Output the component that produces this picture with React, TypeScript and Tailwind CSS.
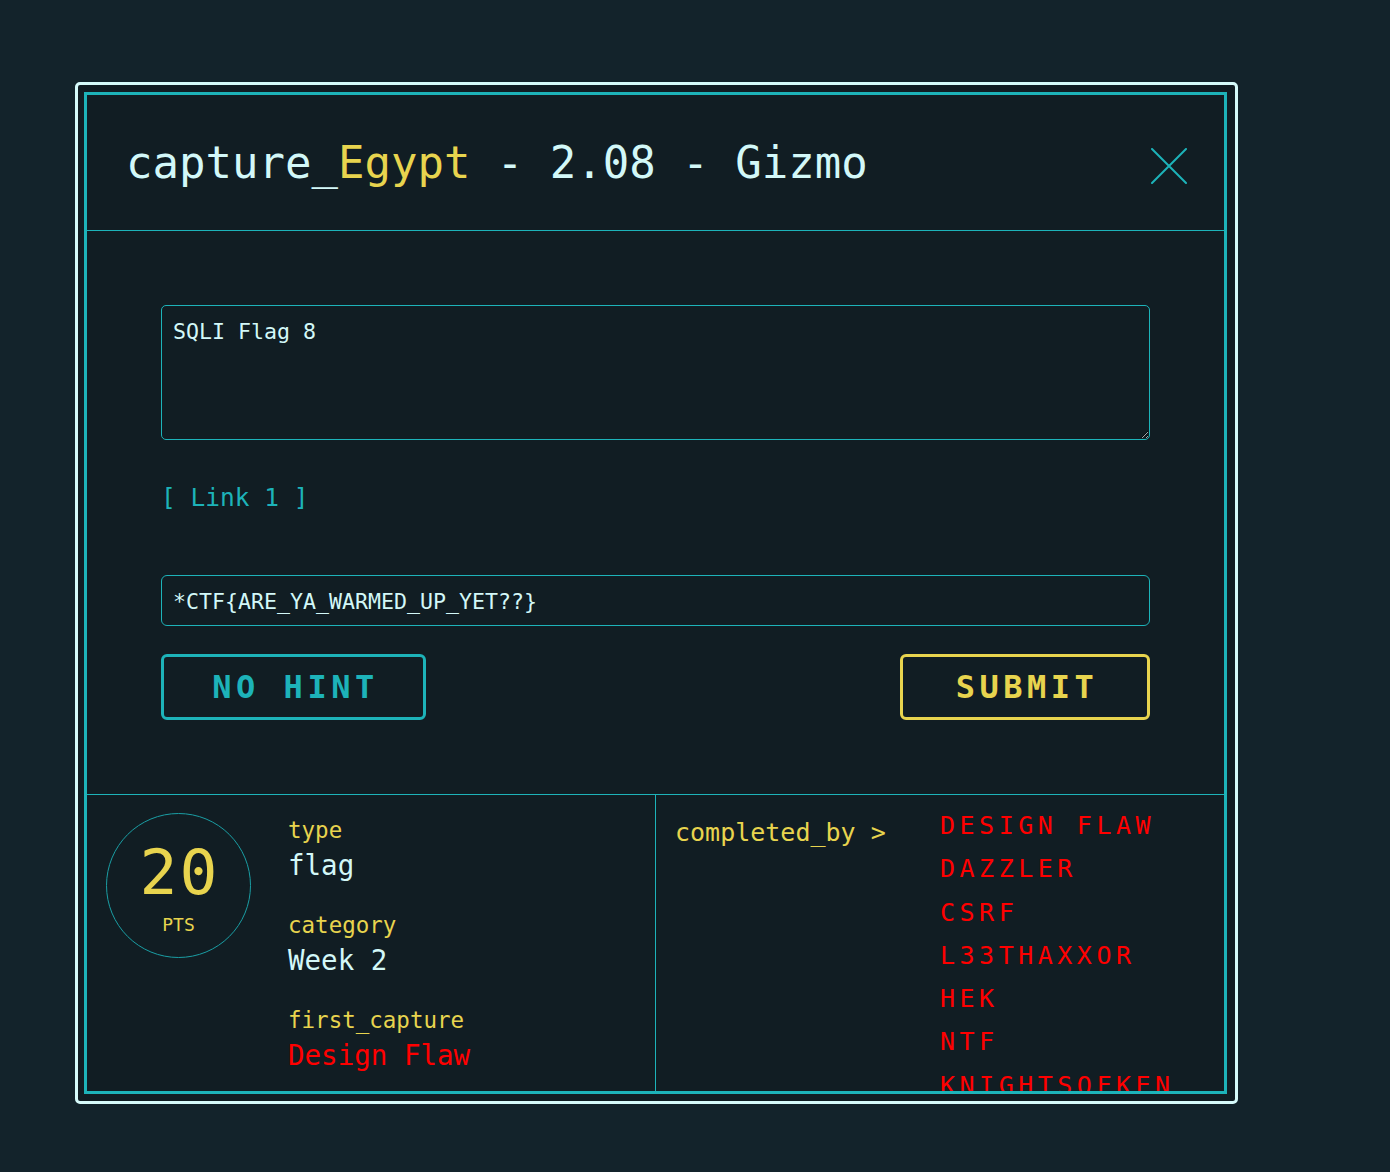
import React from "react";

const COMPLETED_BY = [
  "DESIGN FLAW",
  "DAZZLER",
  "CSRF",
  "L33THAXXOR",
  "HEK",
  "NTF",
  "KNIGHTSOFKEN",
];

const DETAILS = [
  { label: "type", value: "flag", tone: "text-[#d3f8f8]" },
  { label: "category", value: "Week 2", tone: "text-[#d3f8f8]" },
  { label: "first_capture", value: "Design Flaw", tone: "text-[#ff0000]" },
];

function CloseIcon() {
  return (
    <svg width="36" height="36" viewBox="0 0 36 36" fill="none" aria-hidden="true">
      <path d="M1 1 L35 35 M35 1 L1 35" stroke="#1db3b9" strokeWidth="2" strokeLinecap="round" />
    </svg>
  );
}

function PointsBadge({ points }: { points: number }) {
  return (
    <div className="flex h-[145px] w-[145px] shrink-0 flex-col items-center rounded-full border border-[#1a9ea4] pt-[28px]">
      <span className="pl-[2px] text-[63px] leading-[62px] tracking-[2px] text-[#e8d44e]">{points}</span>
      <span className="mt-[12px] text-[18px] leading-[18px] text-[#e8d44e]">PTS</span>
    </div>
  );
}

export default function App() {
  return (
    <div className="min-h-screen bg-[#13232b] pl-[75px] pt-[82px] font-['DejaVu_Sans_Mono',monospace]">
      <div className="h-[1022px] w-[1163px] rounded-[5px] border-[3px] border-[#d6fbfb] bg-[#111d23] py-[7px] pl-[6px] pr-[8px]">
        <div className="flex h-full flex-col overflow-hidden border-[3px] border-[#1db3b9]">
          {/* header */}
          <div className="flex h-[136px] shrink-0 items-center justify-between border-b border-[#1db3b9] pl-[39px] pr-[37px]">
            <h1 className="text-[44px] leading-[52px] text-[#d3f8f8]">
              capture_<span className="text-[#e8d44e]">Egypt</span> - 2.08 - Gizmo
            </h1>
            <button className="mt-[6px]">
              <CloseIcon />
            </button>
          </div>

          {/* body */}
          <div className="flex shrink-0 flex-col border-b border-[#1db3b9] px-[74px] pb-[74px] pt-[74px]">
            <textarea
              spellCheck={false}
              defaultValue="SQLI Flag 8"
              className="h-[135px] w-full rounded-[5px] border border-[#1db3b9] px-[11px] pt-[13px] text-[21.6px] leading-[26px] text-[#d3f8f8] outline-none"
            />
            <div className="mt-[43px] h-[30px] text-[24.5px] leading-[30px] text-[#1db3b9]">[ Link 1 ]</div>
            <input
              spellCheck={false}
              defaultValue="*CTF{ARE_YA_WARMED_UP_YET??}"
              className="mt-[62px] h-[51px] w-full rounded-[6px] border border-[#1db3b9] px-[11px] pt-[2px] text-[21.6px] leading-[26px] text-[#d3f8f8] outline-none"
            />
            <div className="mt-[28px] flex justify-between">
              <button className="flex h-[66px] w-[265px] items-center justify-center rounded-[6px] border-[3px] border-[#1db3b9] pl-[4px] text-[32px] font-bold tracking-[4.5px] text-[#1db3b9]">
                NO HINT
              </button>
              <button className="flex h-[66px] w-[250px] items-center justify-center rounded-[6px] border-[3px] border-[#e8d44e] pl-[4px] text-[32px] font-bold tracking-[4.5px] text-[#e8d44e]">
                SUBMIT
              </button>
            </div>
          </div>

          {/* footer */}
          <div className="flex min-h-0 flex-1">
            <div className="flex w-[569px] shrink-0 border-r border-[#1db3b9] pl-[19px] pt-[18px]">
              <PointsBadge points={20} />
              <div className="ml-[37px] flex flex-col gap-[29px] pt-[3px]">
                {DETAILS.map((item) => (
                  <div key={item.label} className="flex flex-col">
                    <span className="text-[22.5px] leading-[28px] text-[#e8d44e]">{item.label}</span>
                    <span className={`mt-[4px] text-[27.5px] leading-[34px] ${item.tone}`}>{item.value}</span>
                  </div>
                ))}
              </div>
            </div>
            <div className="flex flex-1 pl-[19px]">
              <div className="w-[265px] shrink-0 pt-[16px] text-[25px] leading-[43px] text-[#e8d44e]">
                completed_by &gt;
              </div>
              <ol className="flex flex-col pt-[9px]">
                {COMPLETED_BY.map((team) => (
                  <li key={team} className="text-[25px] leading-[43.3px] tracking-[4.5px] text-[#ff0000]">
                    {team}
                  </li>
                ))}
              </ol>
            </div>
          </div>
        </div>
      </div>
    </div>
  );
}
